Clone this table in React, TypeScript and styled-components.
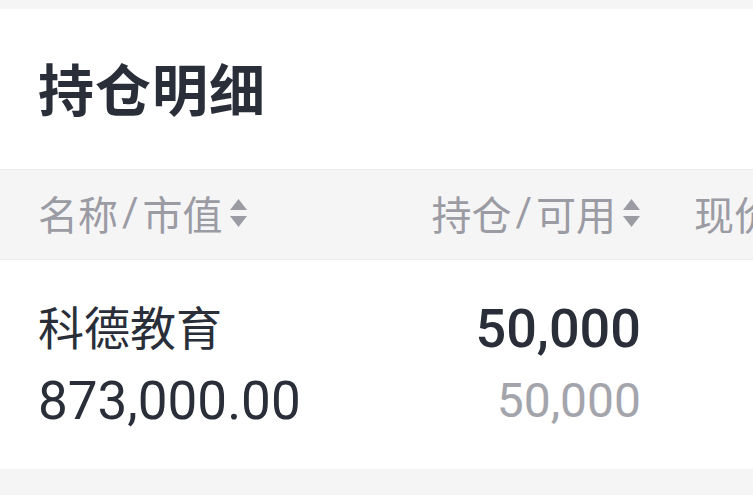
import styled, { createGlobalStyle } from "styled-components";

const GlobalStyle = createGlobalStyle`
  html, body {
    margin: 0;
    padding: 0;
    background: #f5f5f6;
    overflow: hidden;
  }
  body {
    font-family: Roboto, "Noto Sans CJK SC", sans-serif;
    color: #292e39;
  }
`;

const Page = styled.div`
  width: 753px;
  height: 495px;
  padding-top: 9px;
  box-sizing: border-box;
  overflow: hidden;
`;

const Card = styled.div`
  background: #fff;
  width: 960px;
`;

const TitleBar = styled.div`
  height: 161px;
  display: flex;
  align-items: center;
  padding-left: 38px;
  border-bottom: 1px solid #ededef;
  box-sizing: border-box;
`;

const Title = styled.h2`
  margin: -6px 0 0;
  font-family: "Noto Sans CJK SC", sans-serif;
  font-size: 56px;
  font-weight: 700;
  letter-spacing: 1px;
  color: #292e39;
`;

const Row = styled.div<{ head?: boolean }>`
  display: grid;
  grid-template-columns: 300px 250px 260px;
  column-gap: 53px;
  padding-left: 38px;
  box-sizing: border-box;
  background: ${(p) => (p.head ? "#f5f5f6" : "#fff")};
  border-bottom: ${(p) => (p.head ? "1px solid #ebebed" : "none")};
  height: ${(p) => (p.head ? "90px" : "209px")};
  align-items: center;
`;

const HeadCell = styled.div<{ right?: boolean }>`
  display: flex;
  align-items: center;
  justify-content: ${(p) => (p.right ? "flex-end" : "flex-start")};
  font-family: "Noto Sans CJK SC", sans-serif;
  font-size: 40px;
  color: #9b9ba4;
  white-space: nowrap;
  margin-top: -4px;
`;

const Slash = styled.span`
  font-family: Roboto, sans-serif;
  margin: 0 4px;
`;

const SortIcon = styled.svg`
  margin-left: 6px;
  flex: none;
`;

const Cell = styled.div<{ right?: boolean }>`
  display: flex;
  flex-direction: column;
  align-items: ${(p) => (p.right ? "flex-end" : "flex-start")};
`;

const Line = styled.div<{ size: number; weight?: number; muted?: boolean }>`
  height: 72px;
  line-height: 72px;
  font-size: ${(p) => p.size}px;
  font-weight: ${(p) => p.weight ?? 400};
  color: ${(p) => (p.muted ? "#a4a4ac" : "#292e39")};
  white-space: nowrap;
`;

const Sort = () => (
  <SortIcon width="19" height="32" viewBox="0 0 19 32">
    <path d="M1 13 L9.5 2 L18 13 Z" fill="#9b9ba4" />
    <path d="M1 19 L18 19 L9.5 30 Z" fill="#9b9ba4" />
  </SortIcon>
);

export default function App() {
  return (
    <Page>
      <GlobalStyle />
      <Card>
        <TitleBar>
          <Title>持仓明细</Title>
        </TitleBar>
        <Row head>
          <HeadCell>
            名称<Slash>/</Slash>市值
            <Sort />
          </HeadCell>
          <HeadCell right>
            持仓<Slash>/</Slash>可用
            <Sort />
          </HeadCell>
          <HeadCell>现价</HeadCell>
        </Row>
        <Row>
          <Cell>
            <Line size={46}>科德教育</Line>
            <Line size={53}>873,000.00</Line>
          </Cell>
          <Cell right>
            <Line size={54} weight={500}>50,000</Line>
            <Line size={48} muted>50,000</Line>
          </Cell>
          <Cell />
        </Row>
      </Card>
    </Page>
  );
}
